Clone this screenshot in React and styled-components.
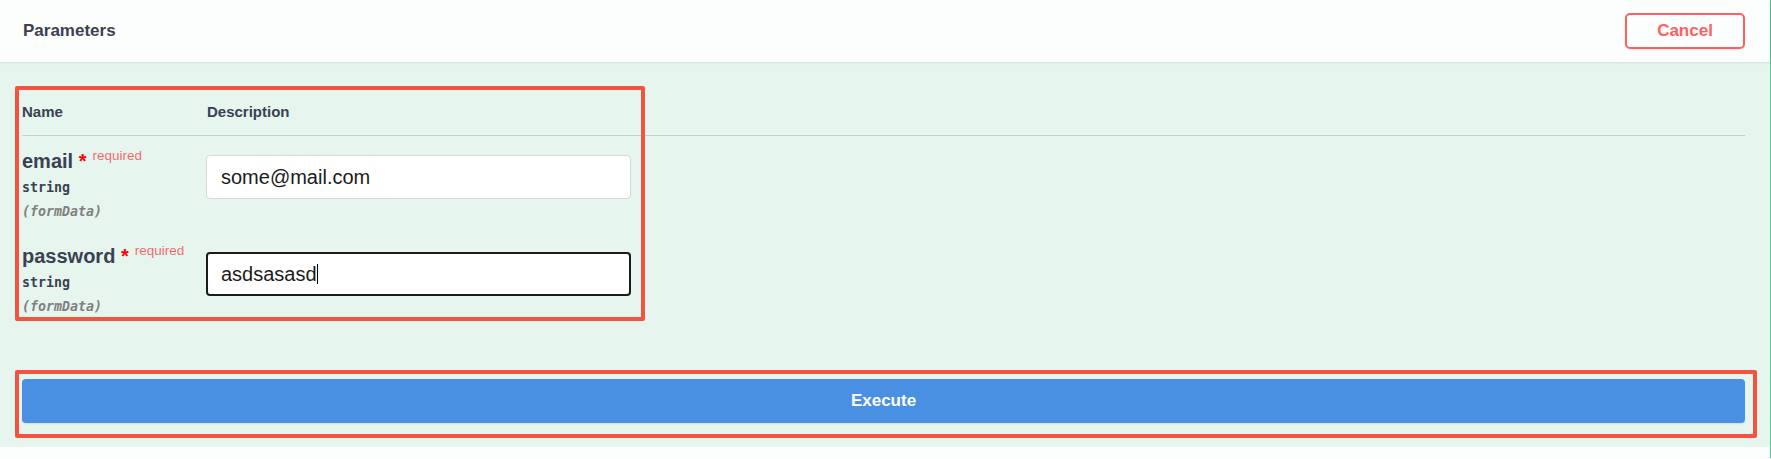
import React from "react";
import styled, { createGlobalStyle } from "styled-components";

const Global = createGlobalStyle`
  html, body { margin: 0; padding: 0; overflow: hidden; background: #fcfefd; }
  * { box-sizing: border-box; }
`;

const Block = styled.div`
  width: 1771px;
  border-right: 1px solid #49cc90;
  font-family: "Liberation Sans", Arial, sans-serif;
  color: #3b4151;
`;

const SectionHeader = styled.div`
  position: relative;
  z-index: 1;
  height: 62px;
  display: flex;
  align-items: center;
  justify-content: space-between;
  padding: 0 25px 0 23px;
  background: #fcfefd;
  box-shadow: 0 1px 2px rgba(0, 0, 0, 0.1);
`;

const Title = styled.h4`
  margin: 0;
  font-size: 17px;
  font-weight: 700;
  color: #3b4151;
`;

const CancelButton = styled.button`
  width: 120px;
  height: 36px;
  border: 2px solid #ff6060;
  border-radius: 5px;
  background: transparent;
  color: #ff6060;
  font-family: inherit;
  font-size: 17px;
  font-weight: 700;
  box-shadow: 0 1px 2px rgba(0, 0, 0, 0.1);
  cursor: pointer;
`;

const Body = styled.div`
  position: relative;
  background: #e7f5ef;
  padding: 31px 25px 24px 22px;
`;

const HeadRow = styled.div`
  display: grid;
  grid-template-columns: 184px 1fr;
  padding: 10px 0 14px;
  border-bottom: 1px solid rgba(59, 65, 81, 0.2);
`;

const HeadCell = styled.div`
  font-size: 15px;
  font-weight: 700;
  line-height: 18px;
  padding-left: ${(p) => p.$indent || 0}px;
`;

const ParamRow = styled.div`
  display: grid;
  grid-template-columns: 184px 1fr;
  height: 95px;
`;

const NameCell = styled.div`
  padding-top: 13px;
`;

const ParamName = styled.div`
  font-size: 20px;
  font-weight: 700;
  line-height: 24px;
  color: #3b4151;
  white-space: nowrap;
`;

const Star = styled.span`
  color: red;
  font-weight: 700;
`;

const Required = styled.span`
  color: rgba(255, 0, 0, 0.6);
  font-size: 13.5px;
  font-weight: 400;
  position: relative;
  top: -8px;
  margin-left: 6px;
`;

const TypeLine = styled.div`
  font-family: "DejaVu Sans Mono", "Liberation Mono", monospace;
  font-size: 13.3px;
  line-height: 24px;
  font-weight: 700;
  font-style: ${(p) => (p.$muted ? "italic" : "normal")};
  color: ${(p) => (p.$muted ? "#808080" : "#3b4151")};
`;

const DescCell = styled.div`
  padding-top: ${(p) => (p.$focused ? 21 : 19)}px;
`;

const Field = styled.div`
  width: 425px;
  height: 44px;
  display: flex;
  align-items: center;
  background: #fff;
  border: ${(p) => (p.$focused ? "2px solid #1b1b1b" : "1px solid #d9d9d9")};
  border-radius: 4px;
  padding: 0 ${(p) => (p.$focused ? 13 : 14)}px;
  font-size: 20px;
  color: #1b1b1b;
`;

const Caret = styled.span`
  display: inline-block;
  width: 1px;
  height: 20px;
  background: #000;
`;

const ExecuteButton = styled.button`
  display: block;
  width: 100%;
  height: 44px;
  margin-top: 53px;
  border: none;
  border-radius: 4px;
  background: #4990e2;
  color: #fff;
  font-family: inherit;
  font-size: 17px;
  font-weight: 700;
  box-shadow: 0 1px 2px rgba(0, 0, 0, 0.1);
  cursor: pointer;
`;

const Annotation = styled.div`
  position: absolute;
  border: 4px solid #f3533f;
  border-radius: 2px;
  pointer-events: none;
`;

const NextHeader = styled.div`
  height: 11px;
  background: #fcfefd;
`;

const params = [
  { name: "email", value: "some@mail.com", focused: false },
  { name: "password", value: "asdsasasd", focused: true },
];

export default function App() {
  return (
    <>
      <Global />
      <Block>
        <SectionHeader>
          <Title>Parameters</Title>
          <CancelButton>Cancel</CancelButton>
        </SectionHeader>
        <Body>
          <HeadRow>
            <HeadCell>Name</HeadCell>
            <HeadCell $indent={1}>Description</HeadCell>
          </HeadRow>
          {params.map((p) => (
            <ParamRow key={p.name}>
              <NameCell>
                <ParamName>
                  {p.name}
                  <Star>{"\u00a0*"}</Star>
                  <Required>required</Required>
                </ParamName>
                <TypeLine>string</TypeLine>
                <TypeLine $muted>(formData)</TypeLine>
              </NameCell>
              <DescCell $focused={p.focused}>
                <Field $focused={p.focused}>
                  {p.value}
                  {p.focused && <Caret />}
                </Field>
              </DescCell>
            </ParamRow>
          ))}
          <ExecuteButton>Execute</ExecuteButton>
          <Annotation style={{ left: 15, top: 24, width: 630, height: 235 }} />
          <Annotation style={{ left: 15, top: 308, width: 1742, height: 68 }} />
        </Body>
        <NextHeader />
      </Block>
    </>
  );
}
